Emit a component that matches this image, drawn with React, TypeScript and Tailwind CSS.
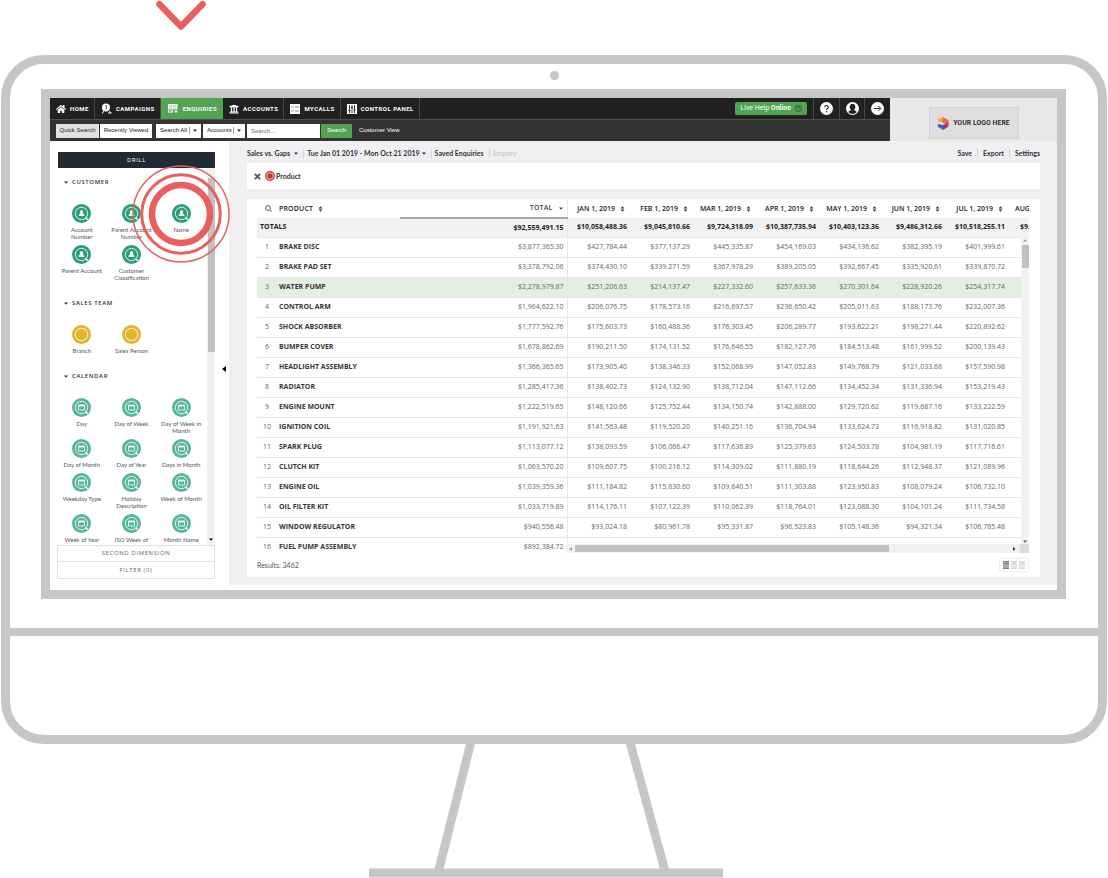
import type { ReactNode } from 'react';
import { FaHome, FaUniversity } from 'react-icons/fa';

const months = ['JAN', 'FEB', 'MAR', 'APR', 'MAY', 'JUN', 'JUL'];

const totals = ['$10,058,488.36', '$9,045,810.66', '$9,724,318.09', '$10,387,735.94', '$10,403,123.36', '$9,486,312.66', '$10,518,255.11'];

const rows = [
  { name: 'BRAKE DISC', total: '$3,877,365.30', values: ['$427,784.44', '$377,137.29', '$445,335.87', '$454,169.03', '$434,136.62', '$382,395.19', '$401,999.61'] },
  { name: 'BRAKE PAD SET', total: '$3,378,792.06', values: ['$374,430.10', '$339,271.59', '$367,978.29', '$389,205.05', '$392,667.45', '$335,920.61', '$339,870.72'] },
  { name: 'WATER PUMP', total: '$2,278,979.87', values: ['$251,206.63', '$214,137.47', '$227,332.60', '$257,633.36', '$270,301.64', '$228,920.26', '$254,317.74'] },
  { name: 'CONTROL ARM', total: '$1,964,622.10', values: ['$206,076.75', '$178,573.16', '$216,697.57', '$236,650.42', '$205,011.63', '$188,173.76', '$232,007.36'] },
  { name: 'SHOCK ABSORBER', total: '$1,777,592.76', values: ['$175,603.73', '$160,488.36', '$176,303.45', '$206,289.77', '$193,622.21', '$198,271.44', '$220,892.62'] },
  { name: 'BUMPER COVER', total: '$1,678,862.69', values: ['$190,211.50', '$174,131.52', '$176,646.55', '$182,127.76', '$184,513.48', '$161,999.52', '$200,139.43'] },
  { name: 'HEADLIGHT ASSEMBLY', total: '$1,366,365.65', values: ['$173,905.40', '$138,346.33', '$152,068.99', '$147,052.83', '$149,768.79', '$121,033.68', '$157,590.98'] },
  { name: 'RADIATOR', total: '$1,285,417.36', values: ['$138,402.73', '$124,132.90', '$138,712.04', '$147,112.66', '$134,452.34', '$131,336.94', '$153,219.43'] },
  { name: 'ENGINE MOUNT', total: '$1,222,519.65', values: ['$148,120.66', '$125,752.44', '$134,150.74', '$142,888.00', '$129,720.62', '$119,687.16', '$133,222.59'] },
  { name: 'IGNITION COIL', total: '$1,191,921.63', values: ['$141,563.48', '$119,520.20', '$140,251.16', '$136,704.94', '$133,624.73', '$116,918.82', '$131,020.85'] },
  { name: 'SPARK PLUG', total: '$1,113,077.12', values: ['$138,093.59', '$106,066.47', '$117,636.89', '$125,379.63', '$124,503.78', '$104,981.19', '$117,716.61'] },
  { name: 'CLUTCH KIT', total: '$1,063,570.20', values: ['$109,607.75', '$100,216.12', '$114,309.02', '$111,880.19', '$118,644.26', '$112,948.37', '$121,089.96'] },
  { name: 'ENGINE OIL', total: '$1,039,359.36', values: ['$111,184.82', '$115,830.60', '$109,640.51', '$111,303.88', '$123,950.83', '$108,079.24', '$106,732.10'] },
  { name: 'OIL FILTER KIT', total: '$1,033,719.89', values: ['$114,176.11', '$107,122.39', '$110,062.39', '$118,764.01', '$123,088.30', '$104,101.24', '$111,734.58'] },
  { name: 'WINDOW REGULATOR', total: '$940,556.48', values: ['$93,024.18', '$80,961.78', '$95,331.87', '$96,523.83', '$105,148.36', '$94,321.34', '$106,785.48'] },
  { name: 'FUEL PUMP ASSEMBLY', total: '$892,384.72', values: ['$89,281.30', '$83,201.34', '$90,271.44', '$93,420.42', '$98,424.42', '$105,427.31', '$114,873.42'] },
];

// Line breaks in the labels are kept as written
const customer = ['Account\nNumber', 'Parent Account\nNumber', 'Name', 'Parent Account', 'Customer\nClassification'];
const salesTeam = ['Branch', 'Sales Person'];
const calendar = [
  'Day', 'Day of Week', 'Day of Week in\nMonth',
  'Day of Month', 'Day of Year', 'Days in Month',
  'Weekday Type', 'Holiday\nDescription', 'Week of Month',
  'Week of Year', 'ISO Week of', 'Month Name',
];

type Kind = 'person' | 'plain' | 'calendar';

function DimensionIcon({ kind }: { kind: Kind }) {
  const fill = kind === 'person' ? '#2b9f72' : kind === 'plain' ? '#e3b52d' : '#55b795';
  return (
    <svg viewBox="0 0 19 19" className="h-[19px] w-[19px] shrink-0">
      <circle cx="9.5" cy="9.5" r="9.5" fill={fill} />
      <circle cx="9.5" cy="9.5" r="6.2" fill="none" stroke="#fff" strokeOpacity=".85" />
      {kind !== 'plain' && <path d="M13.5 13.5l2.500 2.500" stroke="#fff" strokeWidth="1.2" />}
      {kind === 'person' && <path d="M9.500 6.200a1.600 1.600 0 0 1 1 2.900c.2.6 2 .8 2 2.900h-6c0-2.100 1.800-2.300 2-2.900a1.600 1.600 0 0 1 1-2.900z" fill="#fff" />}
      {kind === 'calendar' && (
        <g fill="none" stroke="#fff">
          <path d="M6.500 7h6v5h-6z" strokeWidth=".8" />
          <path d="M6.500 7.700h6" strokeWidth="1.400" />
        </g>
      )}
    </svg>
  );
}

function Section({ title, items, kind }: { title: string; items: string[]; kind: Kind }) {
  return (
    <section className="mb-3">
      <h2 className="mb-[17px] flex h-[10px] items-center gap-1 pl-[7px] text-[6px] font-semibold tracking-widest text-[#333]">
        <Caret />
        {title}
      </h2>
      <div className="grid grid-cols-3 pr-px">
        {items.map((item) => (
          <button key={item} className="flex flex-col items-center pb-[5px] font-['Lato','Open_Sans',sans-serif] text-[6px] leading-[7px] text-[#555]">
            <DimensionIcon kind={kind} />
            <span className="mt-[3px] whitespace-pre">{item}</span>
          </button>
        ))}
      </div>
    </section>
  );
}

function Caret() {
  return (
    <svg viewBox="0 0 4 3" className="h-[3px] w-1 shrink-0">
      <path d="M0 .5h4L2 2.800z" fill="currentColor" />
    </svg>
  );
}

function SortIcon() {
  return (
    <svg viewBox="0 0 5 6" className="h-[6px] w-[5px] shrink-0">
      <path d="M2.500 .2L4.400 2.500H.6zM2.500 5.800L.6 3.500h3.800z" fill="#333" />
    </svg>
  );
}

function NavLink({ icon, label, active }: { icon: ReactNode; label: string; active?: boolean }) {
  return (
    <a
      href="#"
      className={
        active
          ? 'flex items-center gap-[5px] bg-[#52a352] pr-[6px] pl-[7px]'
          : 'flex items-center gap-1 border-r border-[#484848] pr-[5px] pl-[6px]'
      }
    >
      {icon}
      {label}
    </a>
  );
}

function Picker({ label, value }: { label: string; value: string }) {
  return (
    <div className="relative flex h-[14px] items-center bg-white text-[#222]">
      <select aria-label={label} className="h-full appearance-none bg-transparent pr-[13px] pb-px pl-1 text-[6px]">
        <option>{value}</option>
      </select>
      <span className="pointer-events-none absolute right-1 flex h-[7px] items-center border-l border-gray-400 pl-[3px]">
        <Caret />
      </span>
    </div>
  );
}

function TopBar() {
  return (
    <header className="flex font-['Roboto','Liberation_Sans',sans-serif]">
      <div className="min-w-0 flex-1 text-white">
        <nav className="flex h-[21px] bg-[#212121] text-[6px] font-bold tracking-[0.08em]">
          <NavLink icon={<FaHome className="h-[10px] w-[10px]" />} label="HOME" />
          <NavLink
            label="CAMPAIGNS"
            icon={
              <svg viewBox="0 0 11 11" className="h-[11px] w-[11px]">
                <circle cx="5" cy="4.500" r="4" fill="#fff" />
                <path d="M4.300 2.700h1v3.600" fill="none" stroke="#222" strokeWidth=".8" />
                <path d="M3 7L1.500 10.500M8 8.500l2.500 1.500M7 10h3" fill="none" stroke="#fff" />
              </svg>
            }
          />
          <NavLink
            active
            label="ENQUIRIES"
            icon={
              <svg viewBox="0 0 10 9" className="h-[9px] w-[10px]">
                <path d="M0 0h9.500v5.500H0zM0 6.500h5v2H0z" fill="#fff" />
                <path d="M1 2h7M1 4h3M5 4h3M1 7.500h3" stroke="#52a352" strokeWidth=".6" />
                <path d="M6.500 7.500h3M8 6v3" stroke="#fff" />
              </svg>
            }
          />
          <NavLink icon={<FaUniversity className="h-[10px] w-[10px]" />} label="ACCOUNTS" />
          <NavLink
            label="MYCALLS"
            icon={
              <svg viewBox="0 0 10 10" className="h-[10px] w-[10px]">
                <rect width="10" height="10" fill="#fff" />
                <path d="M1 2.500l1 1L3.500 2M5 3h4M1 6.500l1 1L3.500 6M5 7h4" fill="none" stroke="#555" strokeWidth=".7" />
              </svg>
            }
          />
          <NavLink
            label="CONTROL PANEL"
            icon={
              <svg viewBox="0 0 10 10" className="h-[10px] w-[10px]">
                <rect width="10" height="10" fill="#fff" />
                <path d="M2.500 1v8M5 1v8M7.500 1v8M1.500 6.500h2M4 3.500h2M6.500 6h2" stroke="#222" strokeWidth=".9" />
              </svg>
            }
          />
          <div className="ml-auto flex items-center font-normal tracking-normal">
            <button className="mr-[6px] flex h-[13px] items-center gap-1 rounded-[2px] bg-[#52a352] px-[5px] text-[7px]">
              <span>
                Live Help <b>Online</b>
              </span>
              <svg viewBox="0 0 7 7" className="h-[7px] w-[7px]">
                <circle cx="3.500" cy="3.500" r="3" fill="none" stroke="#244f24" strokeWidth=".8" />
                <path d="M2.500 2.800c0-1.300 2-1.300 2 0 0 .7-1 .7-1 1.400M3.500 4.900v.6" fill="none" stroke="#244f24" strokeWidth=".7" />
              </svg>
            </button>
            <button aria-label="Help" className="flex h-full w-[26px] items-center justify-center border-l border-[#484848]">
              <svg viewBox="0 0 13 13" className="h-[13px] w-[13px]">
                <circle cx="6.500" cy="6.500" r="6.500" fill="#fff" />
                <path d="M4.800 5.200c0-2.300 3.500-2.200 3.500 0 0 1.300-1.800 1.300-1.800 2.800M6.500 9v1.200" fill="none" stroke="#222" strokeWidth="1.100" />
              </svg>
            </button>
            <button aria-label="Profile" className="flex h-full w-[25px] items-center justify-center border-l border-[#484848]">
              <svg viewBox="0 0 13 13" className="h-[13px] w-[13px]">
                <circle cx="6.500" cy="6.500" r="6.500" fill="#fff" />
                <path d="M6.500 1.800a2.800 3.200 0 0 1 1.400 6c.2 1 2.300 1 2.900 2.200a5.800 5.800 0 0 1-8.600 0c.6-1.200 2.700-1.200 2.900-2.200a2.800 3.200 0 0 1 1.400-6z" fill="#222" />
              </svg>
            </button>
            <button aria-label="Log out" className="flex h-full w-[26px] items-center justify-center border-l border-[#484848]">
              <svg viewBox="0 0 13 13" className="h-[13px] w-[13px]">
                <circle cx="6.500" cy="6.500" r="6.500" fill="#fff" />
                <path d="M2.800 6.500h7M7.300 4l2.500 2.500L7.300 9" fill="none" stroke="#222" strokeWidth=".9" />
              </svg>
            </button>
          </div>
        </nav>
        <div className="flex h-[22px] items-center border-t border-[#505050] bg-[#333] pl-[6px] font-['Liberation_Sans',sans-serif] text-[6px] text-[#222]">
          <button className="h-[14px] w-[43px] bg-[#e2e2e2]">Quick Search</button>
          <button className="ml-px h-[14px] w-[52px] bg-white">Recently Viewed</button>
          <div className="ml-1 flex gap-[2px]">
            <Picker label="Search in" value="Search All" />
            <Picker label="Record type" value="Accounts" />
            <input aria-label="Search" placeholder="Search..." className="h-[14px] w-[73px] bg-white px-1 placeholder:text-gray-500" />
          </div>
          <button className="ml-px h-[14px] w-[31px] bg-[#52a352] text-white">Search</button>
          <a href="#" className="ml-[7px] text-white">Customer View</a>
        </div>
      </div>
      <div className="flex w-[167px] justify-center bg-[#e8e8e8] pt-[9px]">
        <div className="flex h-8 w-[90px] items-center justify-center gap-1 border border-[#d2d2d2] bg-[#dedede]">
          <svg viewBox="0 0 12 13" className="h-[13px] w-3">
            <path d="M1 2.500L6 0l-1 5-4-.5z" fill="#f6a03c" />
            <path d="M6 0l5.500 3.200L8 7 5 5z" fill="#ee6a3a" />
            <path d="M11.500 3.200v6.300L8 7z" fill="#d9304f" />
            <path d="M11.500 9.500L6 13V8l2-1z" fill="#8a3b94" />
            <path d="M6 13L.5 9.500 1 7l5 1z" fill="#3c64c4" />
          </svg>
          <span className="font-['Roboto_Condensed','Roboto',sans-serif] text-[8px] font-medium whitespace-nowrap text-[#222]">YOUR LOGO HERE</span>
        </div>
      </div>
    </header>
  );
}

function Sidebar() {
  return (
    <aside className="relative flex w-[179px] shrink-0 pt-[11px] pl-[7px]">
      <div className="w-[158px]">
        <h1 className="ml-px flex h-4 items-center justify-center bg-[#222a33] text-[6px] tracking-widest text-white">DRILL</h1>
        <div className="flex h-[377px] overflow-hidden">
          <div className="flex-1 pt-[9px]">
            <Section title="CUSTOMER" items={customer} kind="person" />
            <Section title="SALES TEAM" items={salesTeam} kind="plain" />
            <Section title="CALENDAR" items={calendar} kind="calendar" />
          </div>
          <div className="flex w-2 flex-col items-center justify-between bg-[#f1f1f1] pt-[10px] pb-1">
            <div className="h-[174px] w-[7px] bg-[#c1c1c1]" />
            <Caret />
          </div>
        </div>
        <button className="block h-[17px] w-full border border-[#e2e2e2] text-[6px] tracking-widest text-[#666]">SECOND DIMENSION</button>
        <button className="block h-[17px] w-full border border-t-0 border-[#e2e2e2] text-[6px] tracking-widest text-[#666]">FILTER (0)</button>
      </div>
      <button aria-label="Collapse panel" className="flex flex-1 items-center justify-center pl-[3px]">
        <svg viewBox="0 0 4 6" className="h-[6px] w-1">
          <path d="M4 0v6L0 3z" fill="#000" />
        </svg>
      </button>
      {/* Pulse rings around the Name dimension */}
      <svg viewBox="0 0 98 98" className="pointer-events-none absolute top-[24px] left-[82px] z-10 h-[98px] w-[98px]">
        <g fill="none" stroke="#e95f5d">
          <circle cx="49" cy="49" r="48" strokeWidth="1.500" />
          <circle cx="49" cy="49" r="39.300" strokeWidth="3" />
          <circle cx="49" cy="49" r="29" strokeWidth="6.500" />
        </g>
      </svg>
    </aside>
  );
}

function ProductTable() {
  return (
    <div className="relative h-[354px] overflow-hidden">
      {/* August starts past the visible edge, so the table runs wider than its box */}
      <table className="w-[calc(100%+42px)] table-fixed border-collapse text-right text-[7px] leading-[10px] text-[#666]">
        <colgroup>
          <col className="w-[22px]" />
          <col />
          <col className="w-[167px]" />
          {months.map((m) => (
            <col key={m} className="w-[63px]" />
          ))}
          <col className="w-[63px]" />
        </colgroup>
        <thead className="font-semibold text-[#222]">
          <tr className="h-[19px]">
            <th className="p-0">
              <svg viewBox="0 0 8 8" className="mx-auto h-[7px] w-[7px]">
                <path d="M5.700 5.700L7.600 7.600M6.300 3.500a2.800 2.800 0 1 1-5.600 0 2.800 2.800 0 0 1 5.600 0z" fill="none" stroke="#333" strokeWidth=".9" />
              </svg>
            </th>
            <th className="p-0 font-semibold">
              <span className="flex items-center gap-[5px] tracking-wide">
                PRODUCT <SortIcon />
              </span>
            </th>
            <th className="border-r border-b-2 border-r-gray-200 border-b-[#a8a8a8] p-0 pr-1 font-semibold text-[#444]">
              <span className="flex items-center justify-end gap-[6px] tracking-wide">
                TOTAL <Caret />
              </span>
            </th>
            {months.map((m) => (
              <th key={m} className="p-0 pr-[5px] font-semibold">
                <span className="flex items-center justify-end gap-[5px] whitespace-nowrap">
                  {m} 1, 2019 <SortIcon />
                </span>
              </th>
            ))}
            <th className="p-0 pl-[7px] text-left font-semibold">AUG</th>
          </tr>
          <tr className="h-[19px] border-b border-gray-200 bg-[#f2f2f2] font-bold">
            <td colSpan={2} className="p-0 pl-[3px] text-left">TOTALS</td>
            <td className="border-r border-gray-200 p-0 pr-[3px]">$92,559,491.15</td>
            {totals.map((t) => (
              <td key={t} className="p-0 pr-[3px]">{t}</td>
            ))}
            <td className="p-0 pl-3 text-left">$9.</td>
          </tr>
        </thead>
        <tbody>
          {rows.map((row, i) => (
            <tr key={row.name} className={i === 2 ? 'h-5 border-b border-gray-200 bg-[#e3f0df]' : 'h-5 border-b border-gray-200'}>
              <td className="p-0 pr-[2px] text-center">{i + 1}</td>
              <td className="p-0 text-left font-bold whitespace-nowrap text-[#3a3338]">{row.name}</td>
              <td className="border-r border-gray-200 p-0 pr-[3px]">{row.total}</td>
              {row.values.map((v, n) => (
                <td key={n} className="p-0 pr-[3px]">{v}</td>
              ))}
              <td />
            </tr>
          ))}
        </tbody>
      </table>
      <div className="absolute top-[38px] right-0 flex h-[308px] w-2 flex-col items-center justify-between bg-[#f1f1f1] pt-[2px] pb-[2px] text-[#555]">
        <svg viewBox="0 0 4 3" className="h-[3px] w-1">
          <path d="M0 2.500h4L2 .2z" fill="#999" />
        </svg>
        <div className="mt-[3px] mb-auto h-[23px] w-[7px] bg-[#c1c1c1]" />
        <Caret />
      </div>
      <div className="absolute right-0 bottom-0 flex h-[9px] w-[463px] items-center bg-[#f1f1f1]">
        <svg viewBox="0 0 3 4" className="mx-[3px] h-1 w-[3px]">
          <path d="M3 0v4L.5 2z" fill="#999" />
        </svg>
        <div className="h-[7px] w-[314px] bg-[#c1c1c1]" />
        <svg viewBox="0 0 3 4" className="mr-1 ml-auto h-1 w-[3px]">
          <path d="M0 0v4l2.500-2z" fill="#333" />
        </svg>
        <div className="h-full w-[9px] bg-[#dcdcdc]" />
      </div>
    </div>
  );
}

function ViewIcon({ color }: { color: string }) {
  return (
    <svg viewBox="0 0 6 8" className="h-2 w-[6px]">
      <path d="M0 .8h6M0 2.900h6M0 5h6M0 7.100h6" stroke={color} strokeWidth="1.200" />
    </svg>
  );
}

function Workspace() {
  return (
    <main className="min-w-0 flex-1 bg-[#f0f0f3] pr-[17px] pb-2 pl-[18px]">
      <div className="flex h-[22px] items-center gap-[5px] pt-[2px] font-['Lato','Open_Sans',sans-serif] text-[7px] leading-[10px] font-bold whitespace-nowrap text-[#333]">
        <button className="flex items-center gap-1">
          Sales vs. Gaps <Caret />
        </button>
        <button className="flex items-center gap-[2px] border-l border-gray-300 pl-[3px]">
          Tue Jan 01 2019 - Mon Oct 21 2019 <Caret />
        </button>
        <button className="border-l border-gray-300 pl-[3px]">Saved Enquiries</button>
        <button disabled className="border-l border-gray-300 pl-[3px] text-[#ccc]">Enquiry</button>
        <button className="ml-auto">Save</button>
        <button className="border-l border-gray-300 pl-[5px]">Export</button>
        <button className="border-l border-gray-300 pl-[5px]">Settings</button>
      </div>
      <div className="mb-[10px] flex h-[26px] items-center gap-1 bg-white pl-[7px] text-[7px] font-semibold text-[#333]">
        <button aria-label="Remove Product">
          <svg viewBox="0 0 7 7" className="h-[7px] w-[7px]">
            <path d="M.8.8l5.400 5.400M6.200.8L.8 6.200" stroke="#555" strokeWidth="1.800" />
          </svg>
        </button>
        <span className="flex items-center gap-px font-['Lato','Open_Sans',sans-serif] font-bold">
          <svg viewBox="0 0 10 10" className="h-[10px] w-[10px]">
            <circle cx="5" cy="5" r="4.900" fill="#c8372d" />
            <circle cx="5" cy="5" r="3.300" fill="none" stroke="#fff" strokeWidth=".7" />
          </svg>
          Product
        </span>
      </div>
      <div className="bg-white pr-[11px] pl-[10px]">
        <ProductTable />
        <div className="flex h-6 items-center justify-between text-[7px] text-[#555]">
          <span className="font-['Lato','Open_Sans',sans-serif]">Results: 3462</span>
          <div className="flex h-[14px] items-center gap-[2px] border border-[#f0f0f0] px-[3px]">
            <button aria-label="Compact rows"><ViewIcon color="#555" /></button>
            <button aria-label="Normal rows"><ViewIcon color="#ccc" /></button>
            <button aria-label="Tall rows"><ViewIcon color="#ccc" /></button>
          </div>
        </div>
      </div>
    </main>
  );
}

export default function App() {
  return (
    <div className="overflow-hidden bg-white font-['Open_Sans','Noto_Sans',sans-serif]">
      <div className="h-[55px] pl-[155px]">
        <svg viewBox="0 0 52 31" className="h-[31px] w-[52px]">
          <path d="M4.500 4.200L26 26.500 47.500 4.200" fill="none" stroke="#e95f5d" strokeWidth="6.500" strokeLinecap="round" strokeLinejoin="round" />
        </svg>
      </div>

      {/* Monitor */}
      <div className="mx-px rounded-[43px] border-[9px] border-[#c6c6c6]">
        <div className="flex h-[25px] justify-center pt-[7px]">
          <div className="h-[9px] w-[9px] rounded-full bg-[#c6c6c6]" />
        </div>
        <div className="mr-8 mb-[29px] ml-[31px] border-[9px] border-[#c6c6c6] pb-[5px]">
          <TopBar />
          <div className="flex">
            <Sidebar />
            <Workspace />
          </div>
        </div>
        <div className="h-2 bg-[#c6c6c6]" />
        <div className="h-[99px]" />
      </div>

      {/* Stand */}
      <div className="flex justify-center pr-4">
        <svg viewBox="0 0 354 134" className="h-[134px] w-[354px]">
          <path d="M97 0h9L74.500 125h-9zM257 0h9l34 125h-9zM0 124.500h354v9H0z" fill="#c6c6c6" />
        </svg>
      </div>
    </div>
  );
}
